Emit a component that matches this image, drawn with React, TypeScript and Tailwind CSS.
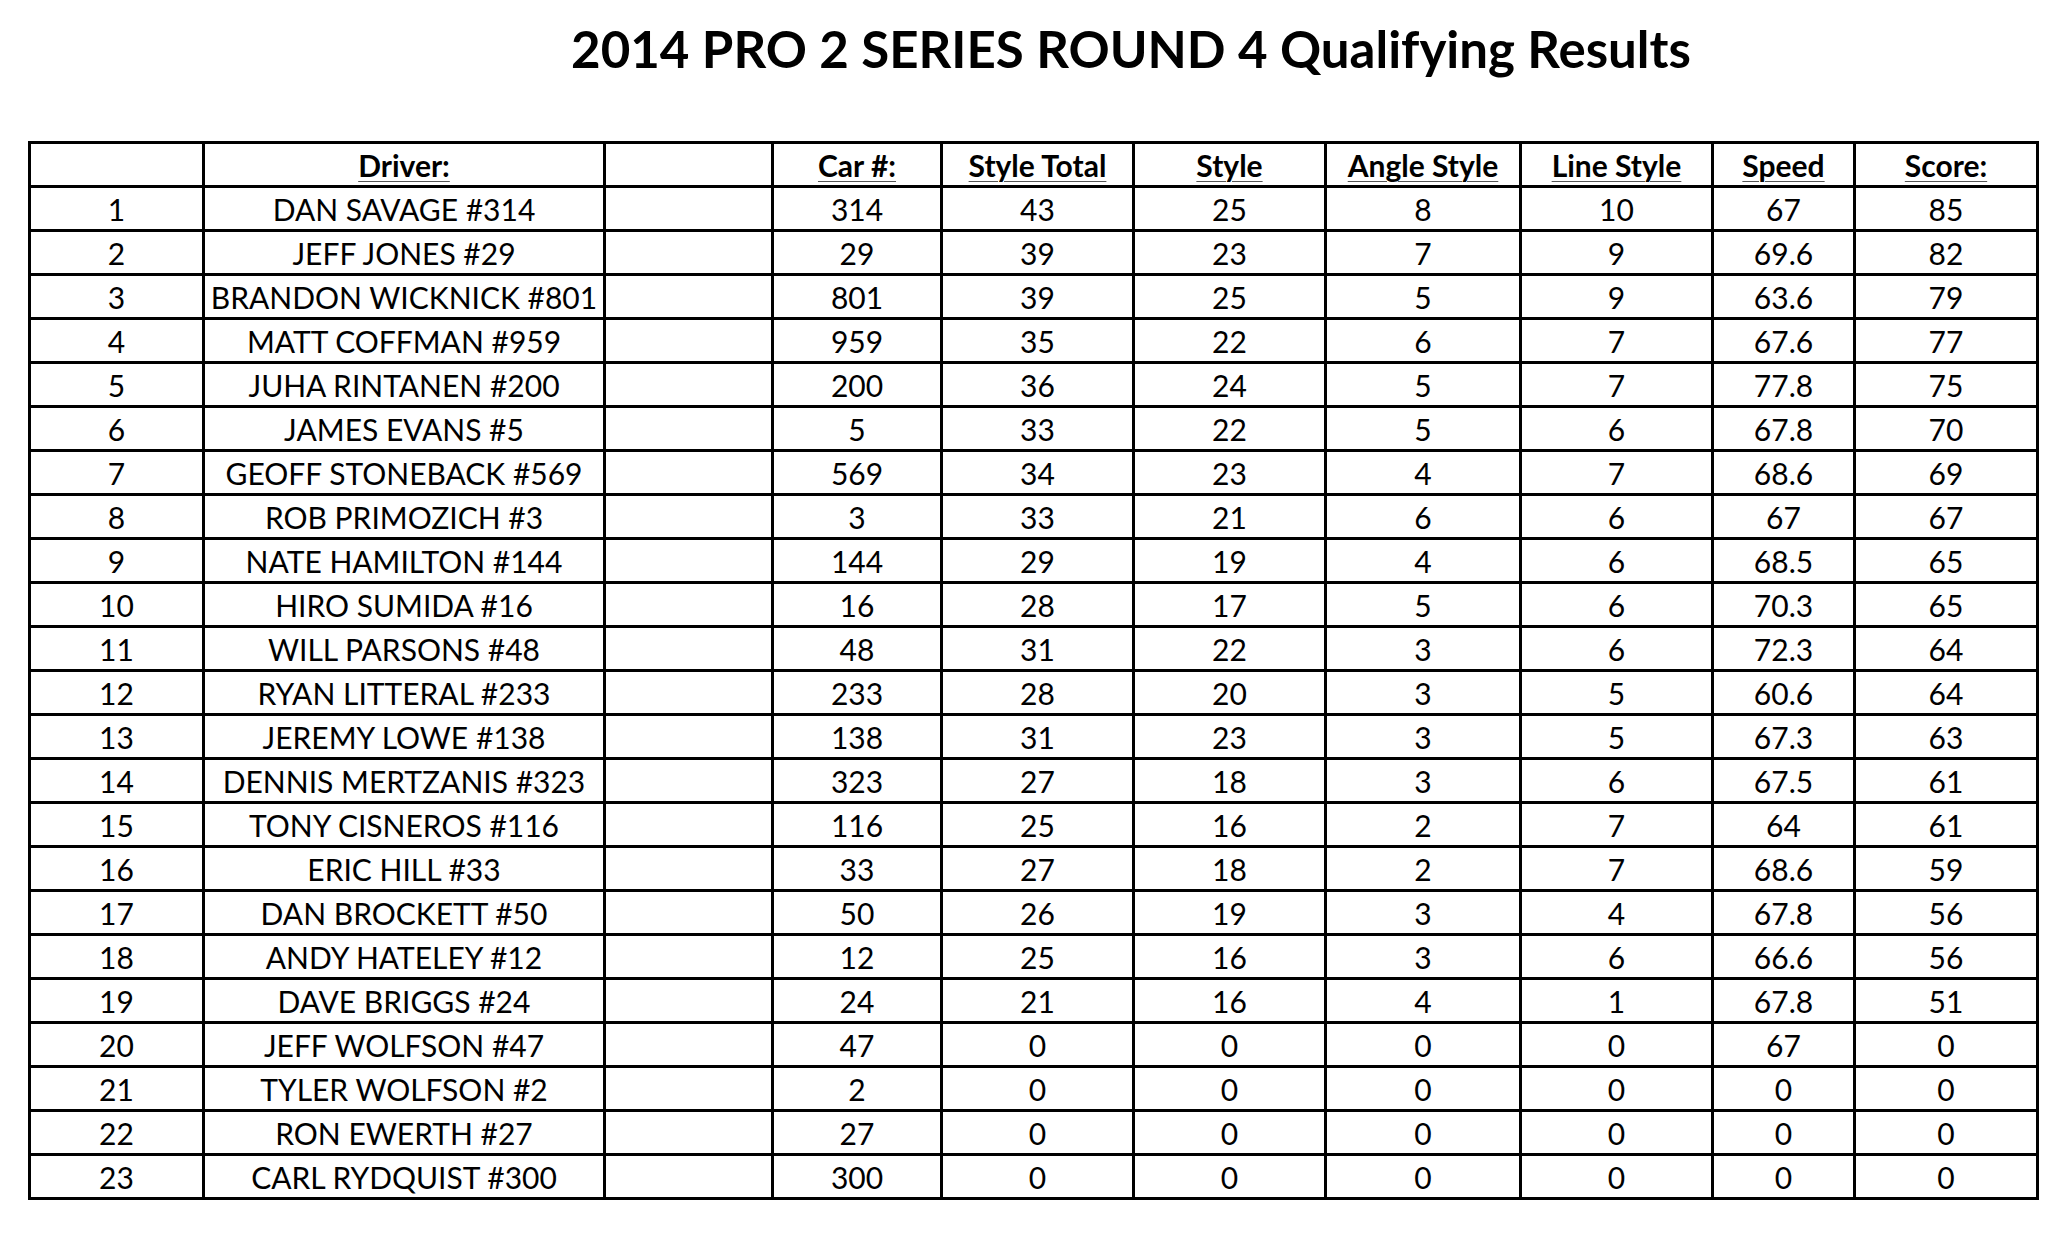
import React from "react";

const headers = ["", "Driver:", "", "Car #:", "Style Total", "Style", "Angle Style", "Line Style", "Speed", "Score:"];

const rows: (string | number)[][] = [
    [1, "DAN SAVAGE #314", 314, 43, 25, 8, 10, 67, 85],
    [2, "JEFF JONES #29", 29, 39, 23, 7, 9, 69.6, 82],
    [3, "BRANDON WICKNICK #801", 801, 39, 25, 5, 9, 63.6, 79],
    [4, "MATT COFFMAN #959", 959, 35, 22, 6, 7, 67.6, 77],
    [5, "JUHA RINTANEN #200", 200, 36, 24, 5, 7, 77.8, 75],
    [6, "JAMES EVANS #5", 5, 33, 22, 5, 6, 67.8, 70],
    [7, "GEOFF STONEBACK #569", 569, 34, 23, 4, 7, 68.6, 69],
    [8, "ROB PRIMOZICH #3", 3, 33, 21, 6, 6, 67, 67],
    [9, "NATE HAMILTON #144", 144, 29, 19, 4, 6, 68.5, 65],
    [10, "HIRO SUMIDA #16", 16, 28, 17, 5, 6, 70.3, 65],
    [11, "WILL PARSONS #48", 48, 31, 22, 3, 6, 72.3, 64],
    [12, "RYAN LITTERAL #233", 233, 28, 20, 3, 5, 60.6, 64],
    [13, "JEREMY LOWE #138", 138, 31, 23, 3, 5, 67.3, 63],
    [14, "DENNIS MERTZANIS #323", 323, 27, 18, 3, 6, 67.5, 61],
    [15, "TONY CISNEROS #116", 116, 25, 16, 2, 7, 64, 61],
    [16, "ERIC HILL #33", 33, 27, 18, 2, 7, 68.6, 59],
    [17, "DAN BROCKETT #50", 50, 26, 19, 3, 4, 67.8, 56],
    [18, "ANDY HATELEY #12", 12, 25, 16, 3, 6, 66.6, 56],
    [19, "DAVE BRIGGS #24", 24, 21, 16, 4, 1, 67.8, 51],
    [20, "JEFF WOLFSON #47", 47, 0, 0, 0, 0, 67, 0],
    [21, "TYLER WOLFSON #2", 2, 0, 0, 0, 0, 0, 0],
    [22, "RON EWERTH #27", 27, 0, 0, 0, 0, 0, 0],
    [23, "CARL RYDQUIST #300", 300, 0, 0, 0, 0, 0, 0],
];

function App() {
    return (
        <div className="w-[2068px] h-[1234px] bg-white text-black [font-family:Lato,'Liberation_Sans',sans-serif]">
            <div className="h-[141px] pt-[23px] pl-[194px] flex justify-center">
                <h1 className="text-[51px] font-bold leading-none">2014 PRO 2 SERIES ROUND 4 Qualifying Results</h1>
            </div>

            <div className="ml-[28px] w-[2011px] grid grid-cols-[174px_401px_168px_169px_192px_192px_195px_192px_142px_183px] border-l-[3px] border-t-[3px] border-black">
                {headers.map((h, i) => (
                    <Cell key={`h${i}`}>
                        {h && <span className="font-bold underline decoration-1 underline-offset-[4px] decoration-[#555]">{h}</span>}
                    </Cell>
                ))}
                {rows.map((r) => (
                    <React.Fragment key={r[0]}>
                        <Cell>{r[0]}</Cell>
                        <Cell>{r[1]}</Cell>
                        <Cell />
                        {r.slice(2).map((v, i) => (
                            <Cell key={i}>{v}</Cell>
                        ))}
                    </React.Fragment>
                ))}
            </div>
        </div>
    );
}

interface CellProps {
    children?: React.ReactNode;
}

function Cell({ children }: CellProps) {
    return (
        <div className="h-[44px] border-r-[3px] border-b-[3px] border-black pt-[6px] text-center text-[30px] leading-none whitespace-nowrap overflow-hidden">
            {children}
        </div>
    );
}

export default App;
